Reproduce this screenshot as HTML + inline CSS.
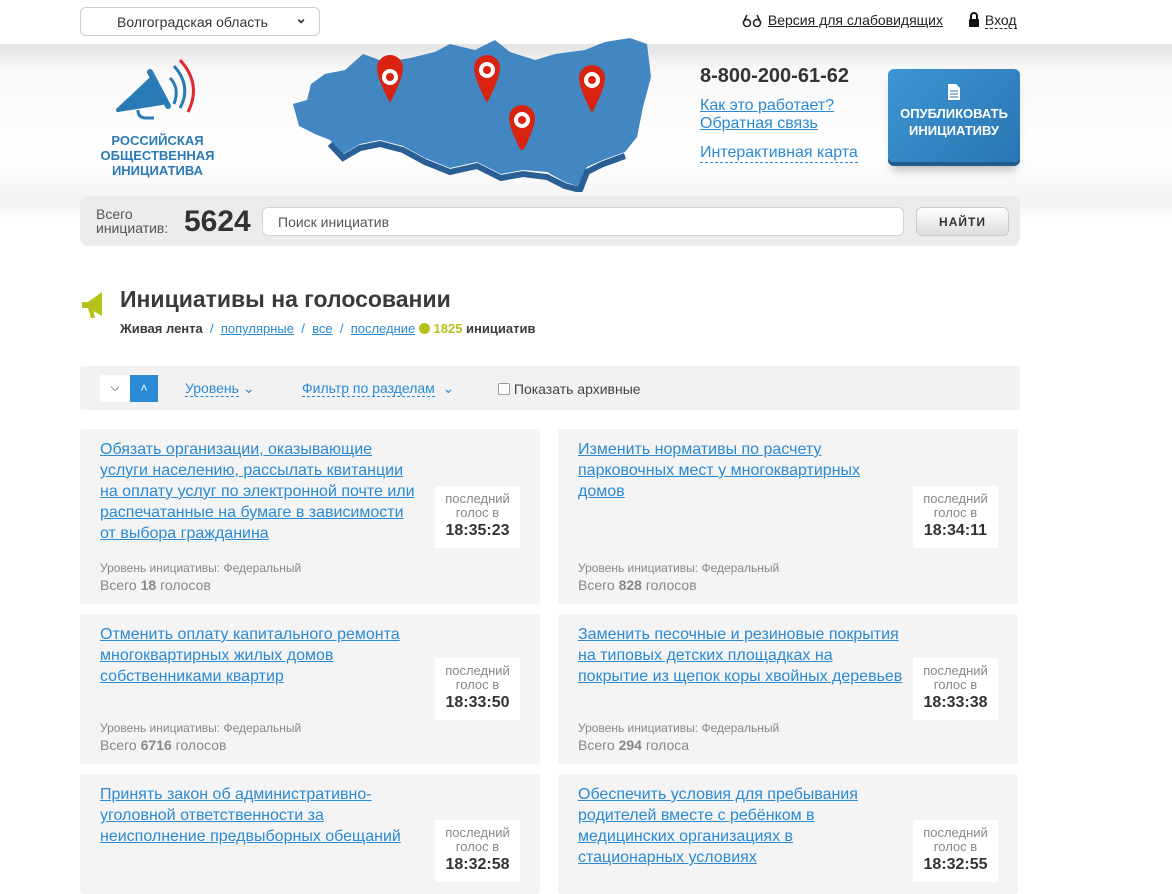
<!DOCTYPE html>
<html><head><meta charset="utf-8"><style>
*{margin:0;padding:0;box-sizing:border-box}
body{width:1172px;height:869px;overflow:hidden;background:#fff;font-family:"Liberation Sans",Arial,sans-serif;color:#333;position:relative}
a{color:#2a8ad4}
.abs{position:absolute}
.band{position:absolute;left:0;top:44px;width:1172px;height:176px;background:linear-gradient(#e3e3e3,#f8f8f8 25px,#fff 110px,#f4f4f4 160px,#fff)}
.sel{left:80px;top:7px;width:240px;height:29px;border:1px solid #ccc;border-radius:6px;background:#fff;font-size:14px;color:#333;padding:6px 0 0 36px}
.card{position:absolute;background:#f4f4f4;border-radius:3px;width:460px}
.card .t{position:absolute;left:20px;top:10px;width:320px;font-size:16px;line-height:21px}
.card .tm{position:absolute;right:20px;width:85px;height:62px;background:#fff;text-align:center;font-size:13px;color:#888;line-height:14px;padding-top:6px}
.card .tm b{display:block;color:#333;font-size:16px;line-height:22px}
.card .lv{position:absolute;left:20px;font-size:12px;color:#888}
.card .vt{position:absolute;left:20px;font-size:14px;color:#888}
</style></head><body>
<div class="band"></div>
<div class="abs sel">Волгоградская область<span style="position:absolute;right:12px;top:2px;font-size:14px;font-weight:bold">&#x2304;</span></div>
<div class="abs" style="left:740px;top:12px;font-size:14px"><svg width="24" height="14" style="vertical-align:-2px"><path d="M3 10 L7 2 M21 10 L17 2" stroke="#222" stroke-width="1.5" fill="none"/><circle cx="7" cy="10" r="3.5" fill="none" stroke="#222" stroke-width="1.5"/><circle cx="17" cy="10" r="3.5" fill="none" stroke="#222" stroke-width="1.5"/></svg> <span style="text-decoration:underline;color:#222">Версия для слабовидящих</span></div>
<div class="abs" style="left:967px;top:12px;font-size:14px;color:#222"><svg width="14" height="16" style="vertical-align:-3px"><path d="M4 7V4a3 3 0 0 1 6 0v3" stroke="#111" stroke-width="2" fill="none"/><rect x="2" y="7" width="10" height="8" rx="1" fill="#111"/></svg> <span style="border-bottom:1px dashed #222">Вход</span></div>
<!-- logo -->
<svg class="abs" style="left:110px;top:58px" width="95" height="68"><path d="M8 52 L40 22 L52 45 Z" fill="#2a7bb5" stroke="#2a7bb5" stroke-width="4" stroke-linejoin="round"/><path d="M40 14 L58 48" stroke="#2a7bb5" stroke-width="6" stroke-linecap="round"/><path d="M28 52 q0 8 8 8 h8" stroke="#2a7bb5" stroke-width="3" fill="none"/><path d="M60 20 q10 10 4 26" stroke="#2a7bb5" stroke-width="3" fill="none"/><path d="M64 8 q18 20 6 42" stroke="#2a7bb5" stroke-width="3" fill="none"/><path d="M70 2 q22 24 8 52" stroke="#e0262e" stroke-width="3" fill="none"/></svg>
<div class="abs" style="left:95px;top:133px;width:125px;text-align:center;font-weight:bold;font-size:13px;line-height:15px;color:#2a7bb5">РОССИЙСКАЯ<br>ОБЩЕСТВЕННАЯ<br>ИНИЦИАТИВА</div>
<!-- map -->
<svg class="abs" style="left:285px;top:22px" width="370" height="170"><path d="M8 82 L22 78 L26 62 L40 52 L60 48 L78 32 L100 40 L125 36 L150 30 L165 22 L190 28 L210 18 L225 30 L250 38 L270 32 L300 28 L320 20 L345 16 L362 22 L366 55 L358 85 L352 115 L340 130 L318 138 L302 145 L295 165 L280 160 L262 150 L238 148 L216 152 L192 140 L165 146 L140 136 L118 124 L95 118 L75 122 L58 132 L45 118 L30 112 L14 104 Z" fill="#4286c2"/><path d="M45 122 L58 136 L75 126 L95 122 L118 128 L140 140 L165 150 L192 144 L216 156 L238 152 L262 155 L280 164 L295 168 L302 150 L318 142 L340 134" stroke="#2a5f95" stroke-width="6" fill="none"/></svg>
<svg class="abs" style="left:375px;top:55px" width="260" height="95"><g fill="#d9220f"><path d="M15 0 a13 13 0 0 1 13 13 q0 10 -13 35 q-13 -25 -13 -35 a13 13 0 0 1 13 -13z"/><path d="M112 0 a13 13 0 0 1 13 13 q0 10 -13 35 q-13 -25 -13 -35 a13 13 0 0 1 13 -13z"/><path d="M217 10 a13 13 0 0 1 13 13 q0 10 -13 35 q-13 -25 -13 -35 a13 13 0 0 1 13 -13z"/><path d="M147 50 a13 13 0 0 1 13 13 q0 10 -13 35 q-13 -25 -13 -35 a13 13 0 0 1 13 -13z"/></g><g fill="#fff"><circle cx="15" cy="22" r="8"/><circle cx="112" cy="15" r="8"/><circle cx="217" cy="25" r="8"/><circle cx="147" cy="65" r="8"/></g><g fill="#d9220f"><circle cx="15" cy="22" r="4"/><circle cx="112" cy="15" r="4"/><circle cx="217" cy="25" r="4"/><circle cx="147" cy="65" r="4"/></g></svg>
<div class="abs" style="left:700px;top:65px;font-size:20px;font-weight:bold;color:#333">8-800-200-61-62</div>
<div class="abs" style="left:700px;top:97px;font-size:16px;line-height:18px"><a href="#">Как это работает?</a><br><a href="#">Обратная связь</a></div>
<div class="abs" style="left:700px;top:144px;font-size:16px;color:#2a8ad4;border-bottom:1px dashed #2a8ad4">Интерактивная карта</div>
<div class="abs" style="left:888px;top:69px;width:132px;height:93px;border-radius:6px;background:linear-gradient(135deg,#3d95d3,#2a76b2);box-shadow:0 4px 0 #1d5d8f,0 12px 10px -4px rgba(0,0,0,.25);color:#fff;font-weight:bold;font-size:13px;text-align:center;padding-top:14px;line-height:17px"><svg width="14" height="18"><path d="M1 1h8l4 4v12H1z" fill="#fff"/><path d="M3 8h8M3 11h8M3 14h8" stroke="#2a76b2"/></svg><br>ОПУБЛИКОВАТЬ<br>ИНИЦИАТИВУ</div>
<div class="abs" style="left:80px;top:196px;width:940px;height:50px;background:#ececec;border-radius:8px"></div>
<div class="abs" style="left:96px;top:207px;font-size:14px;line-height:14px;color:#555">Всего<br>инициатив:</div>
<div class="abs" style="left:184px;top:205px;font-size:30px;font-weight:bold;color:#333">5624</div>
<div class="abs" style="left:262px;top:207px;width:642px;height:29px;background:#fff;border:1px solid #d4d4d4;border-radius:6px;font-size:14px;color:#555;padding:6px 0 0 15px">Поиск инициатив</div>
<div class="abs" style="left:916px;top:207px;width:93px;height:29px;border-radius:6px;background:linear-gradient(#fff,#ddd);border:1px solid #ccc;font-size:12px;font-weight:bold;color:#333;text-align:center;padding-top:7px;letter-spacing:1px">НАЙТИ</div>
<!-- section -->
<svg class="abs" style="left:80px;top:288px" width="32" height="32"><path d="M2 14h6l14-10v24L8 20H2z" fill="#b5c21b"/><path d="M8 20l3 10h4l-2-9" fill="#b5c21b"/></svg>
<div class="abs" style="left:120px;top:286px;font-size:23px;font-weight:bold;color:#3a3a3a">Инициативы на голосовании</div>
<div class="abs" style="left:120px;top:321px;font-size:13px;color:#3a3a3a"><b>Живая лента</b> <span style="color:#2a8ad4">&nbsp;/&nbsp;</span> <a href="#">популярные</a> <span style="color:#2a8ad4">&nbsp;/&nbsp;</span> <a href="#">все</a> <span style="color:#2a8ad4">&nbsp;/&nbsp;</span> <a href="#">последние</a> <span style="display:inline-block;width:11px;height:11px;border-radius:50%;background:#b5c21b;vertical-align:-1px"></span> <b style="color:#b5c21b">1825</b> <b>инициатив</b></div>
<div class="abs" style="left:80px;top:366px;width:940px;height:44px;background:#f2f2f2;border-radius:3px"></div>
<div class="abs" style="left:100px;top:375px;width:30px;height:27px;background:#fff;text-align:center;font-size:12px;padding-top:5px">&#x2335;</div>
<div class="abs" style="left:130px;top:375px;width:28px;height:27px;background:#2a8ad4;color:#fff;text-align:center;font-size:12px;padding-top:6px">&#x02C4;</div>
<div class="abs" style="left:185px;top:380px;font-size:14px;color:#2a8ad4"><span style="border-bottom:1px dashed #2a8ad4">Уровень</span> ⌄</div>
<div class="abs" style="left:302px;top:380px;font-size:14px;color:#2a8ad4"><span style="border-bottom:1px dashed #2a8ad4">Фильтр по разделам</span> &nbsp;⌄</div>
<div class="abs" style="left:498px;top:381px;font-size:14px;color:#444"><span style="display:inline-block;width:12px;height:12px;border:1px solid #999;border-radius:2px;background:#fff;vertical-align:-1px"></span> Показать архивные</div>
<!-- cards -->
<div class="card" style="left:80px;top:429px;height:175px"><div class="t"><a href="#">Обязать организации, оказывающие услуги населению, рассылать квитанции на оплату услуг по электронной почте или распечатанные на бумаге в зависимости от выбора гражданина</a></div><div class="tm" style="top:57px">последний<br>голос в<b>18:35:23</b></div><div class="lv" style="top:132px">Уровень инициативы: Федеральный</div><div class="vt" style="top:148px">Всего <b>18</b> голосов</div></div>
<div class="card" style="left:558px;top:429px;height:175px"><div class="t"><a href="#">Изменить нормативы по расчету парковочных мест у многоквартирных домов</a></div><div class="tm" style="top:57px">последний<br>голос в<b>18:34:11</b></div><div class="lv" style="top:132px">Уровень инициативы: Федеральный</div><div class="vt" style="top:148px">Всего <b>828</b> голосов</div></div>
<div class="card" style="left:80px;top:614px;height:150px"><div class="t"><a href="#">Отменить оплату капитального ремонта многоквартирных жилых домов собственниками квартир</a></div><div class="tm" style="top:44px">последний<br>голос в<b>18:33:50</b></div><div class="lv" style="top:107px">Уровень инициативы: Федеральный</div><div class="vt" style="top:123px">Всего <b>6716</b> голосов</div></div>
<div class="card" style="left:558px;top:614px;height:150px"><div class="t" style="width:326px"><a href="#">Заменить песочные и резиновые покрытия на типовых детских площадках на покрытие из щепок коры хвойных деревьев</a></div><div class="tm" style="top:44px">последний<br>голос в<b>18:33:38</b></div><div class="lv" style="top:107px">Уровень инициативы: Федеральный</div><div class="vt" style="top:123px">Всего <b>294</b> голоса</div></div>
<div class="card" style="left:80px;top:774px;height:120px"><div class="t"><a href="#">Принять закон об административно-уголовной ответственности за неисполнение предвыборных обещаний</a></div><div class="tm" style="top:46px">последний<br>голос в<b>18:32:58</b></div></div>
<div class="card" style="left:558px;top:774px;height:120px"><div class="t"><a href="#">Обеспечить условия для пребывания родителей вместе с ребёнком в медицинских организациях в стационарных условиях</a></div><div class="tm" style="top:46px">последний<br>голос в<b>18:32:55</b></div></div>
</body></html>
